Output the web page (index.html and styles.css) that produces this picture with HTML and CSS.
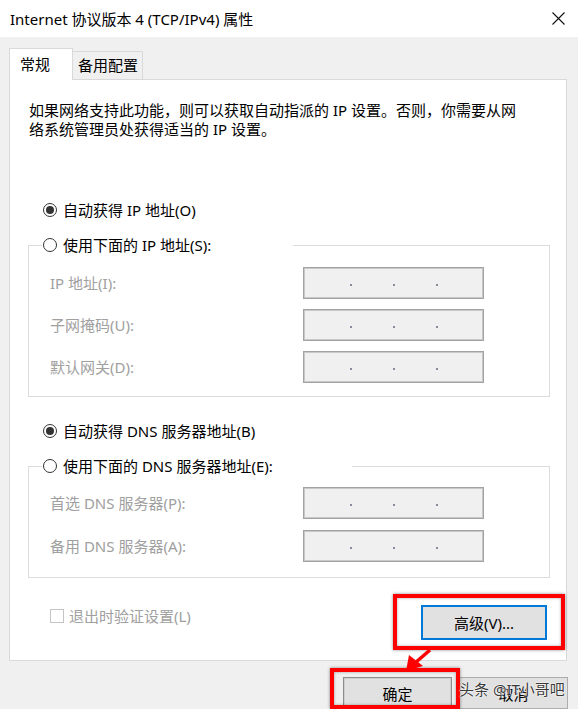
FILE: index.html
```html
<!DOCTYPE html>
<html lang="zh-CN">
<head>
<meta charset="utf-8">
<title>Internet 协议版本 4 (TCP/IPv4) 属性</title>
<link rel="stylesheet" href="styles.css">
</head>
<body>
<div class="window">
  <div class="titlebar">
    <span class="title">Internet 协议版本 4 (TCP/IPv4) 属性</span>
    <svg class="close" width="13" height="13" viewBox="0 0 13 13" aria-hidden="true"><path d="M0.5 0.5L12.5 12.5M12.5 0.5L0.5 12.5" stroke="#111" stroke-width="1.1" fill="none"/></svg>
  </div>

  <div class="tabs">
    <div class="tab active">常规</div>
    <div class="tab">备用配置</div>
  </div>

  <div class="panel">
    <p class="desc">如果网络支持此功能，则可以获取自动指派的 IP 设置。否则，你需要从网<br>络系统管理员处获得适当的 IP 设置。</p>

    <div class="radio-row"><span class="radio checked"></span><span>自动获得 IP 地址(O)</span></div>

    <fieldset class="group group-ip">
      <legend class="legend legend-ip"><span class="radio"></span><span>使用下面的 IP 地址(S):</span></legend>
      <div class="field"><span class="label">IP 地址(I):</span><div class="ipbox"><i></i><i></i><i></i></div></div>
      <div class="field"><span class="label">子网掩码(U):</span><div class="ipbox"><i></i><i></i><i></i></div></div>
      <div class="field"><span class="label">默认网关(D):</span><div class="ipbox"><i></i><i></i><i></i></div></div>
    </fieldset>

    <div class="radio-row radio-dns"><span class="radio checked"></span><span>自动获得 DNS 服务器地址(B)</span></div>

    <fieldset class="group group-dns">
      <legend class="legend legend-dns"><span class="radio"></span><span>使用下面的 DNS 服务器地址(E):</span></legend>
      <div class="field"><span class="label">首选 DNS 服务器(P):</span><div class="ipbox"><i></i><i></i><i></i></div></div>
      <div class="field"><span class="label">备用 DNS 服务器(A):</span><div class="ipbox"><i></i><i></i><i></i></div></div>
    </fieldset>

    <div class="footer-row">
      <div class="check"><span class="box"></span><span>退出时验证设置(L)</span></div>
      <div class="btn adv">高级(V)...</div>
    </div>
  </div>

  <div class="actions">
    <div class="btn ok">确定</div>
    <div class="btn cancel">取消</div>
  </div>

  <div class="mark mark-adv"></div>
  <div class="mark mark-ok"></div>
  <svg class="arrow" width="36" height="30" viewBox="400 645 36 30" aria-hidden="true">
    <line x1="430" y1="650" x2="415" y2="663" stroke="#f00" stroke-width="3.5"/>
    <polygon points="406,671 409,655 423,666" fill="#f00"/>
  </svg>
  <div class="watermark">头条 @IT小哥吧</div>
</div>
</body>
</html>
```

FILE: styles.css
```css
* { box-sizing: border-box; }

html, body {
  margin: 0;
  padding: 0;
}

body {
  width: 578px;
  height: 709px;
  overflow: hidden;
  background: #f0f0f0;
  font-family: "Noto Sans", "Noto Sans CJK SC", sans-serif;
  font-size: 15px;
  color: #000;
}

.window {
  position: relative;
  height: 709px;
}

.titlebar {
  height: 37px;
  background: #fff;
  display: flex;
  align-items: center;
  justify-content: space-between;
  padding: 0 13px 0 10px;
}

.title {
  line-height: 20px;
  color: #000;
}

.close {
  display: block;
}

/* tabs */
.tabs {
  display: flex;
  align-items: flex-end;
  height: 42px;
  padding: 11px 0 0 9px;
}

.tab {
  position: relative;
  line-height: 20px;
  border: 1px solid #d9d9d9;
  border-bottom: none;
}

.tab.active {
  width: 64px;
  height: 32px;
  margin-bottom: -1px;
  background: #fff;
  padding: 5px 0 0 10px;
  z-index: 1;
}

.tab:not(.active) {
  width: 70px;
  height: 28px;
  background: #f0f0f0;
  padding: 3px 0 0 5px;
  border-left: none;
}

/* panel */
.panel {
  margin: 0 11px 0 9px;
  height: 582px;
  border: 1px solid #d9d9d9;
  background: #fff;
  padding: 21px 16px 0 18px;
}

.desc {
  margin: 0 0 0 1px;
  line-height: 19px;
}

.radio-row {
  display: flex;
  align-items: center;
  height: 20px;
  line-height: 20px;
  margin: 61px 0 0 15px;
}

.radio-dns {
  margin-top: 24px;
}

.radio {
  position: relative;
  flex: none;
  width: 14px;
  height: 14px;
  border: 1px solid #333;
  border-radius: 50%;
  background: #fff;
  margin-right: 6px;
}

.radio.checked::after {
  content: "";
  position: absolute;
  left: 2px;
  top: 2px;
  width: 8px;
  height: 8px;
  border-radius: 50%;
  background: #333;
}

/* group boxes */
.group {
  margin: 15px 0 0 0;
  border: 1px solid #dcdcdc;
  padding: 12px 0 13px 0;
  min-width: 0;
}

.group-dns {
  padding: 11px 0 15px 0;
}

.legend {
  display: flex;
  align-items: center;
  height: 20px;
  line-height: 20px;
  margin-left: 13px;
  padding: 0 0 0 1px;
  background: #fff;
}

.legend-ip { width: 251px; }
.legend-dns { width: 310px; }

.field {
  display: flex;
  align-items: center;
  height: 32px;
  padding-left: 21px;
}

.group-ip .field + .field { margin-top: 10px; }
.group-dns .field + .field { margin-top: 11px; }

.label {
  width: 253px;
  flex: none;
  line-height: 20px;
  color: #a0a0a0;
}

.ipbox {
  width: 181px;
  height: 32px;
  flex: none;
  background: #f0f0f0;
  border: 1px solid #a2a2a2;
  box-shadow: inset 0 0 0 1px #c8c8c8;
  display: flex;
  align-items: center;
  gap: 41px;
  padding: 3px 0 0 46px;
}

.ipbox i {
  display: block;
  width: 2px;
  height: 2px;
  background: #8a8a9c;
}

/* footer inside panel */
.footer-row {
  display: flex;
  align-items: flex-start;
  margin-top: 27px;
}

.check {
  display: flex;
  align-items: center;
  height: 20px;
  line-height: 20px;
  margin: 1px 0 0 22px;
  color: #a0a0a0;
}

.check .box {
  width: 14px;
  height: 14px;
  border: 1px solid #c4c4c4;
  background: #fff;
  margin-right: 5px;
}

.btn {
  display: flex;
  align-items: center;
  justify-content: center;
  background: #e1e1e1;
  border: 1px solid #adadad;
  line-height: 20px;
}

.btn.adv {
  width: 126px;
  height: 35px;
  margin: 0 3px 0 auto;
  border: 2px solid #0078d7;
}

/* dialog buttons */
.actions {
  display: flex;
  justify-content: flex-end;
  gap: 7px;
  margin-top: 16px;
  padding-right: 10px;
}

.btn.ok,
.btn.cancel {
  width: 109px;
  height: 32px;
  padding-top: 2px;
}

.btn.ok {
  border: 1px solid #8c8c8c;
  box-shadow: inset 0 0 0 1px #cfcfcf;
}

/* annotations */
.mark {
  position: absolute;
  border: 4px solid #f00;
  box-shadow: 0 0 3px rgba(0, 0, 0, 0.45), inset 0 0 3px rgba(0, 0, 0, 0.35);
}

.mark-adv {
  left: 393px;
  top: 594px;
  width: 172px;
  height: 56px;
}

.mark-ok {
  left: 330px;
  top: 668px;
  width: 130px;
  height: 41px;
}

.arrow {
  position: absolute;
  left: 400px;
  top: 645px;
}

.watermark {
  position: absolute;
  left: 459px;
  top: 679px;
  line-height: 20px;
  font-size: 15px;
  color: #3a3a3a;
  text-shadow: 0 0 2px #fff, 0 0 1px #fff, 0 0 1px #fff;
  white-space: nowrap;
}
```
